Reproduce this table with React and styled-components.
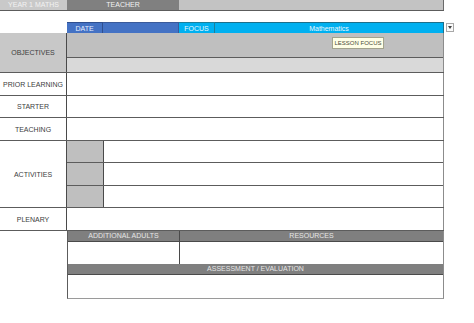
import React from "react";
import styled, { createGlobalStyle } from "styled-components";

const GlobalStyle = createGlobalStyle`
  *, *::before, *::after {
    box-sizing: border-box;
  }
  body {
    margin: 0;
    background: #ffffff;
    font-family: "Liberation Sans", Arial, sans-serif;
  }
`;

const Sheet = styled.div`
  width: 444px;
  display: flex;
  flex-direction: column;
  font-size: 7px;
  color: #404040;
`;

const TopRow = styled.div`
  display: grid;
  grid-template-columns: 67px 112px 1fr;
  height: 11px;
  border-bottom: 1px solid #5c5c5c;
`;

const TopCell = styled.div`
  background: ${(p) => p.bg};
  color: #f2f2f2;
  line-height: 9px;
  text-align: center;
  border-right: ${(p) => (p.last ? "1px solid #6a6a6a" : "none")};
  overflow: hidden;
`;

const Spacer = styled.div`
  height: 11px;
`;

const InfoRow = styled.div`
  position: relative;
  display: grid;
  grid-template-columns: 36px 76px 36px 1fr;
  margin-left: 67px;
  height: 11px;
`;

const InfoCell = styled.div`
  background: ${(p) => p.bg};
  color: ${(p) => p.fg || "#e8f0ff"};
  line-height: 11px;
  text-align: center;
  border-top: 1px solid ${(p) => p.line || "#2f4f8f"};
  border-right: 1px solid ${(p) => p.line || "#2f4f8f"};
`;

const DropButton = styled.div`
  position: absolute;
  left: 379px;
  top: 1px;
  width: 8px;
  height: 9px;
  background: #fbfbfb;
  border: 1px solid #a8a8a8;
  display: flex;
  align-items: center;
  justify-content: center;
`;

const Table = styled.div`
  position: relative;
  display: flex;
  flex-direction: column;
`;

const Row = styled.div`
  display: grid;
  grid-template-columns: 67px 1fr;
  height: ${(p) => p.h}px;
  border-bottom: 1px solid #5c5c5c;
`;

const Label = styled.div`
  background: ${(p) => p.bg || "#ffffff"};
  border-right: 1px solid #4a4a4a;
  display: flex;
  align-items: center;
  justify-content: center;
  text-align: center;
`;

const Field = styled.div`
  display: flex;
  flex-direction: column;
  border-right: 1px solid #8c8c8c;
`;

const Band = styled.div`
  flex: ${(p) => p.grow};
  background: ${(p) => p.bg};
  border-bottom: ${(p) => (p.line ? "1px solid #5c5c5c" : "none")};
`;

const SubRow = styled.div`
  flex: 1;
  display: grid;
  grid-template-columns: 37px 1fr;
  border-bottom: ${(p) => (p.line ? "1px solid #5c5c5c" : "none")};
`;

const Swatch = styled.div`
  background: #bfbfbf;
  border-right: 1px solid #4a4a4a;
`;

const Tooltip = styled.div`
  position: absolute;
  left: 332px;
  top: 4px;
  width: 52px;
  height: 12px;
  background: #ffffe6;
  border: 1px solid #a3a38c;
  color: #4a4a3a;
  font-size: 6px;
  line-height: 10px;
  white-space: nowrap;
  text-align: center;
`;

const Lower = styled.div`
  margin-left: 67px;
  display: flex;
  flex-direction: column;
  border-left: 1px solid #5c5c5c;
  border-right: 1px solid #8c8c8c;
  border-bottom: 1px solid #9a9a9a;
`;

const HeadRow = styled.div`
  display: grid;
  grid-template-columns: ${(p) => p.cols};
  height: 11px;
  border-bottom: 1px solid #4a4a4a;
`;

const Head = styled.div`
  background: #7f7f7f;
  color: #e6e6e6;
  line-height: 10px;
  text-align: center;
  border-right: ${(p) => (p.line ? "1px solid #4a4a4a" : "none")};
`;

const BodyRow = styled.div`
  display: grid;
  grid-template-columns: ${(p) => p.cols};
  height: ${(p) => p.h}px;
`;

const BodyCell = styled.div`
  background: #ffffff;
  border-right: ${(p) => (p.line ? "1px solid #4a4a4a" : "none")};
`;

export default function App() {
  return (
    <>
      <GlobalStyle />
      <Sheet>
        <TopRow>
          <TopCell bg="#c9c9c9">YEAR 1 MATHS</TopCell>
          <TopCell bg="#808080">TEACHER</TopCell>
          <TopCell bg="#c3c3c3" last />
        </TopRow>
        <Spacer />
        <InfoRow>
          <InfoCell bg="#4472c4">DATE</InfoCell>
          <InfoCell bg="#4472c4" line="#3a5a9a" />
          <InfoCell bg="#00b0f0" fg="#e8f8ff" line="#1d7f9a">FOCUS</InfoCell>
          <InfoCell bg="#00b0f0" fg="#e8f8ff" line="#1d6f8a">Mathematics</InfoCell>
          <DropButton>
            <svg width="4" height="3" viewBox="0 0 4 3">
              <path d="M0 0 L4 0 L2 3 Z" fill="#444" />
            </svg>
          </DropButton>
        </InfoRow>
        <Table>
          <Row h={40}>
            <Label bg="#c8c8c8">OBJECTIVES</Label>
            <Field>
              <Band grow={25} bg="#bfbfbf" line />
              <Band grow={14} bg="#d9d9d9" />
            </Field>
          </Row>
          <Row h={23}>
            <Label>PRIOR LEARNING</Label>
            <Field />
          </Row>
          <Row h={22}>
            <Label>STARTER</Label>
            <Field />
          </Row>
          <Row h={23}>
            <Label>TEACHING</Label>
            <Field />
          </Row>
          <Row h={67}>
            <Label>ACTIVITIES</Label>
            <Field>
              <SubRow line>
                <Swatch />
                <div />
              </SubRow>
              <SubRow line>
                <Swatch />
                <div />
              </SubRow>
              <SubRow>
                <Swatch />
                <div />
              </SubRow>
            </Field>
          </Row>
          <Row h={23}>
            <Label>PLENARY</Label>
            <Field />
          </Row>
          <Tooltip>LESSON FOCUS</Tooltip>
        </Table>
        <Lower>
          <HeadRow cols="112px 1fr">
            <Head line>ADDITIONAL ADULTS</Head>
            <Head>RESOURCES</Head>
          </HeadRow>
          <BodyRow cols="112px 1fr" h={22}>
            <BodyCell line />
            <BodyCell />
          </BodyRow>
          <HeadRow cols="1fr">
            <Head>ASSESSMENT / EVALUATION</Head>
          </HeadRow>
          <BodyRow cols="1fr" h={23}>
            <BodyCell />
          </BodyRow>
        </Lower>
      </Sheet>
    </>
  );
}
